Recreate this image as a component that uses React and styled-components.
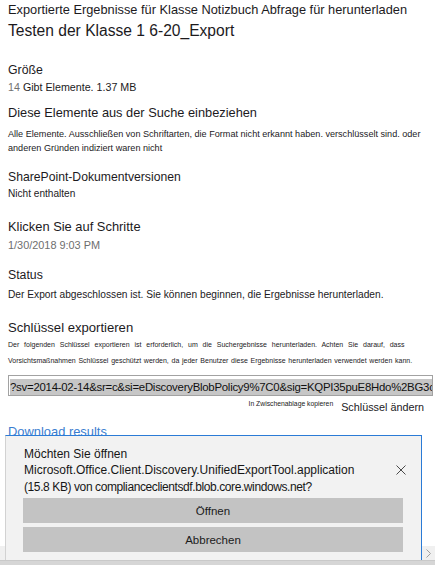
import React from "react";
import styled, { createGlobalStyle } from "styled-components";

const FONT = `"Liberation Sans", Arial, sans-serif`;

const Global = createGlobalStyle`
  html, body { margin: 0; padding: 0; background: #fff; }
  body { font-family: ${FONT}; color: #1c1a1d; }
  * { box-sizing: border-box; }
`;

const Frame = styled.div`
  width: 435px;
  height: 565px;
  display: flex;
  flex-direction: column;
  overflow: hidden;
`;

const Viewport = styled.div`
  position: relative;
  flex: 1;
  overflow: hidden;
`;

const Content = styled.div`
  padding: 2px 5px 0 8px;
  display: flex;
  flex-direction: column;
`;

const Line = styled.div`
  font-size: ${(p) => p.$size}px;
  line-height: ${(p) => p.$lh}px;
  margin-top: ${(p) => p.$mt ?? 0}px;
  color: ${(p) => p.$color ?? "#1c1a1d"};
`;

const Gray = styled.span`
  color: #707070;
  margin-right: 3px;
`;

const Tiny = styled.div`
  font-size: 7px;
  line-height: 16px;
  white-space: nowrap;
  word-spacing: ${(p) => p.$spread ?? 0}px;
  margin-top: ${(p) => p.$mt ?? 0}px;
  color: #1c1a1d;
`;

const KeyField = styled.div`
  margin-top: 5.5px;
  margin-right: -3px;
  height: 21px;
  border: 1px solid #a2a2a2;
  padding: 1px 0 0 1px;
  overflow: hidden;
  white-space: nowrap;
`;

const Selected = styled.span`
  display: inline-block;
  background: #c6c6c6;
  font-size: 11.4px;
  letter-spacing: -0.25px;
  line-height: 17px;
  color: #111;
`;

const KeyActions = styled.div`
  display: flex;
  justify-content: flex-end;
  align-items: flex-start;
  gap: 8px;
  margin-top: 3px;
  padding-right: 6px;
  height: 16px;
`;

const CopyLink = styled.span`
  font-size: 6.8px;
  line-height: 10px;
  color: #222;
`;

const ChangeLink = styled.span`
  font-size: 10.8px;
  line-height: 16px;
  color: #1c1a1d;
`;

const DownloadLink = styled.div`
  font-size: 12.9px;
  line-height: 16px;
  color: #3a7dcf;
  margin-top: 9.5px;
`;

const Notification = styled.div`
  position: absolute;
  z-index: 2;
  left: 5px;
  top: 435px;
  width: 417px;
  height: 125px;
  background: #f2f2f2;
  border-top: 1px solid #2b7bd6;
  border-right: 1px solid #2b7bd6;
  border-left: 1px solid #d2d2d2;
  padding: 9.5px 18px 0 17px;
  display: flex;
  flex-direction: column;
`;

const MessageRow = styled.div`
  display: flex;
  align-items: center;
`;

const Message = styled.div`
  flex: 1;
  padding-left: 1px;
  font-size: 12px;
  line-height: 16.5px;
  color: #161616;
`;

const Source = styled.span`
  letter-spacing: -0.4px;
`;

const Close = styled.button`
  border: none;
  background: transparent;
  padding: 0;
  width: 11px;
  height: 11px;
  margin-right: -3px;
  display: flex;
  align-items: center;
  justify-content: center;
`;

const Buttons = styled.div`
  display: flex;
  flex-direction: column;
  gap: 4px;
  margin-top: 3px;
`;

const ActionButton = styled.button`
  height: 25px;
  border: none;
  background: #c3c3c3;
  font-family: ${FONT};
  font-size: 11.5px;
  color: #1b1b1b;
  padding: 0;
`;

const HScrollbar = styled.div`
  position: absolute;
  z-index: 1;
  left: 0;
  right: 0;
  bottom: 0;
  height: 14px;
  background: #f0f0f0;
  display: flex;
  justify-content: flex-end;
  align-items: center;
`;

const ScrollArrow = styled.div`
  width: 13px;
  height: 14px;
  display: flex;
  align-items: center;
  justify-content: center;
`;

const BottomBar = styled.div`
  height: 5px;
  background: #d6d6d6;
  border-top: 1px solid #c9c9c9;
`;

export default function App() {
  return (
    <>
      <Global />
      <Frame>
        <Viewport>
          <Content>
            <Line $size={12.8} $lh={16}>
              Exportierte Ergebnisse für Klasse Notizbuch Abfrage für herunterladen
            </Line>
            <Line $size={15.6} $lh={20} $mt={3}>Testen der Klasse 1 6-20_Export</Line>

            <Line $size={12.3} $lh={16} $mt={20.5}>Größe</Line>
            <Line $size={10.7} $lh={14} $mt={2.3}>
              <Gray>14</Gray>Gibt Elemente. 1.37 MB
            </Line>

            <Line $size={12.8} $lh={16} $mt={11.6}>Diese Elemente aus der Suche einbeziehen</Line>
            <Line $size={9.1} $lh={14} $mt={5.2}>
              Alle Elemente. Ausschließen von Schriftarten, die Format nicht erkannt haben. verschlüsselt sind. oder anderen Gründen indiziert waren nicht
            </Line>

            <Line $size={12.2} $lh={16} $mt={14}>SharePoint-Dokumentversionen</Line>
            <Line $size={10.1} $lh={14} $mt={2.7}>Nicht enthalten</Line>

            <Line $size={12.9} $lh={16} $mt={18}>Klicken Sie auf Schritte</Line>
            <Line $size={10.9} $lh={14} $mt={2.7} $color="#6e6e6e">1/30/2018 9:03 PM</Line>

            <Line $size={12.3} $lh={16} $mt={15.5}>Status</Line>
            <Line $size={10.2} $lh={14} $mt={4.8}>
              Der Export abgeschlossen ist. Sie können beginnen, die Ergebnisse herunterladen.
            </Line>

            <Line $size={13.1} $lh={16} $mt={18}>Schlüssel exportieren</Line>
            <Tiny $spread={2.9} $mt={1}>
              Der folgenden Schlüssel exportieren ist erforderlich, um die Suchergebnisse herunterladen. Achten Sie darauf, dass
            </Tiny>
            <Tiny $spread={0.8}>
              Vorsichtsmaßnahmen Schlüssel geschützt werden, da jeder Benutzer diese Ergebnisse herunterladen verwendet werden kann.
            </Tiny>

            <KeyField>
              <Selected>?sv=2014-02-14&amp;sr=c&amp;si=eDiscoveryBlobPolicy9%7C0&amp;sig=KQPI35puE8Hdo%2BG3c</Selected>
            </KeyField>
            <KeyActions>
              <CopyLink>In Zwischenablage kopieren</CopyLink>
              <ChangeLink>Schlüssel ändern</ChangeLink>
            </KeyActions>
            <DownloadLink>Download results</DownloadLink>
          </Content>

          <Notification>
            <MessageRow>
              <Message>
                Möchten Sie öffnen
                <br />
                Microsoft.Office.Client.Discovery.UnifiedExportTool.application
                <br />
                <Source>(15.8 KB) von complianceclientsdf.blob.core.windows.net?</Source>
              </Message>
              <Close aria-label="Schließen">
                <svg width="10" height="10" viewBox="0 0 10 10">
                  <path d="M0.5 0.5 L9.5 9.5 M9.5 0.5 L0.5 9.5" stroke="#4a4a4a" strokeWidth="1" fill="none" />
                </svg>
              </Close>
            </MessageRow>
            <Buttons>
              <ActionButton>Öffnen</ActionButton>
              <ActionButton>Abbrechen</ActionButton>
            </Buttons>
          </Notification>

          <HScrollbar>
            <ScrollArrow>
              <svg width="5" height="9" viewBox="0 0 5 9">
                <path d="M0.5 0.5 L4.5 4.5 L0.5 8.5" stroke="#a0a0a0" strokeWidth="1" fill="none" />
              </svg>
            </ScrollArrow>
          </HScrollbar>
        </Viewport>
        <BottomBar />
      </Frame>
    </>
  );
}
